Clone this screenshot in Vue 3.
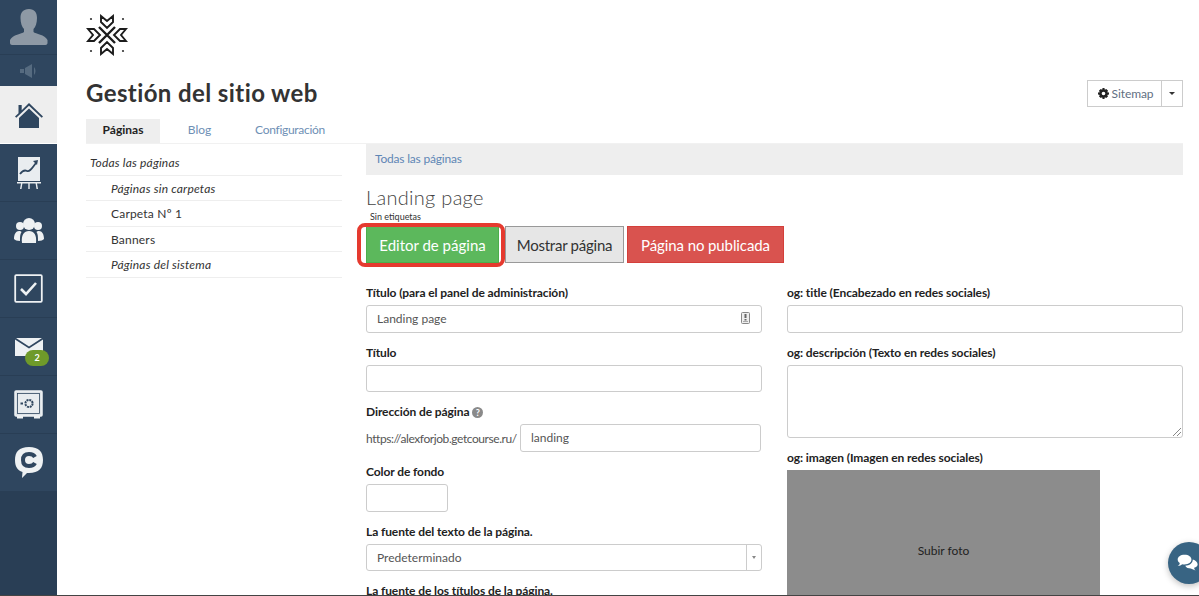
<script setup>
const menu = [
  { label: 'Todas las páginas', cls: 'it top' },
  { label: 'Páginas sin carpetas', cls: 'it sub' },
  { label: 'Carpeta Nº 1', cls: 'sub' },
  { label: 'Banners', cls: 'sub' },
  { label: 'Páginas del sistema', cls: 'it sub' },
]
</script>

<template>
  <div class="page">
    <aside class="rail">
      <div class="avatar">
        <svg width="38" height="36" viewBox="0 0 38 36"><path fill="#8e99a5" d="M19 0c5.500 0 8 3.500 8 9 0 5-1.500 9-3.500 11v3c2 2 11.500 2.500 14 8v3c0 1-1 2-2 2H2c-1 0-2-1-2-2v-3c2.500-5.500 12-6 14-8v-3c-2-2-3.500-6-3.500-11 0-5.500 2.500-9 8.500-9z"/></svg>
      </div>
      <div class="speaker">
        <svg width="18" height="14" viewBox="0 0 18 14"><path fill="#566b80" d="M0 5h4v4H0zM5 4l7-4v14L5 10zM14 3c2 2 2 6 0 8z"/></svg>
      </div>
      <div class="nav active">
        <svg width="30" height="29" viewBox="0 0 30 29"><path fill="#2f465f" d="M15 3 29 16.500l-1.300 1.200L15 5.700 2.300 17.700 1 16.500 4.500 13.200V5h3.200v5.200zM5 18 15 8.500 25 18v10H5z"/></svg>
      </div>
      <div class="nav">
        <svg width="24" height="32" viewBox="0 0 24 32"><path fill="#e9edf0" d="M1 0h22v24H1z"/><path fill="none" stroke="#2f465f" stroke-width="1.800" d="M3 17c3-4 5-4 7-3 3 1 5-3 9-8"/><path fill="#2f465f" d="m21 3-5 1 4 4z"/><path fill="#e9edf0" d="M0 25h24v1.500H0zM4 26.500h1.400L4.500 32H3zM11.300 26.500h1.400V32h-1.400zM18.600 26.500H20l1 5.500h-1.500z"/></svg>
      </div>
      <div class="nav">
        <svg width="30" height="25" viewBox="0 0 30 25"><g fill="#eef1f3"><circle cx="15" cy="6" r="6"/><circle cx="6" cy="8" r="4"/><circle cx="24" cy="8" r="4"/><path d="M8 25c-1-8 2-12 7-12s8 4 7 12zM0 21c0-5 2-8 5-8 1 0 2 0 2.500 1C6 16 6 19 6 23 3 23 1 22 0 21zM30 21c0-5-2-8-5-8-1 0-2 0-2.500 1 1.500 2 1.500 5 1.500 9 3 0 5-1 6-2z"/></g></svg>
      </div>
      <div class="nav">
        <svg width="29" height="29" viewBox="0 0 29 29"><rect x="1.200" y="1.200" width="26.600" height="26.600" rx="1" fill="none" stroke="#eef1f3" stroke-width="1.800"/><path fill="none" stroke="#eef1f3" stroke-width="2.600" d="m7 15 5 5 10-11"/></svg>
      </div>
      <div class="nav mail">
        <svg width="28" height="18" viewBox="0 0 28 18"><path fill="#eef1f3" d="M0 1.500 14 10.500 28 1.500V18H0z"/><path fill="#eef1f3" d="M1 0h26L14 8.500z"/></svg>
        <span class="badge">2</span>
      </div>
      <div class="nav">
        <svg width="29" height="29" viewBox="0 0 29 29"><rect x="1" y="1" width="27" height="25" rx="1" fill="#dfe4e8" stroke="#eef1f3" stroke-width="1.500"/><rect x="3.500" y="3.500" width="22" height="20" fill="#e8ecef" stroke="#2f465f" stroke-width=".8"/><circle cx="15" cy="13.500" r="3.600" fill="none" stroke="#2f465f" stroke-width="2" stroke-dasharray="2 .8"/><path fill="#2f465f" d="M6.500 12.500h2.500v2H6.500z"/><path fill="#eef1f3" d="M3 26h6v2.500H3zM20 26h6v2.500h-6z"/></svg>
      </div>
      <div class="nav">
        <svg width="30" height="31" viewBox="0 0 30 31"><path fill="#eef1f3" d="M15 0c10 0 14 5 14 13s-4 13-14 13h-2l-5 5 .5-6C3 23 1 19 1 13 1 5 5 0 15 0z"/><path fill="none" stroke="#2f465f" stroke-width="4" d="M21 10c-1-2-3-3-6-3-4 0-6 2-6 6s2 6 6 6c3 0 5-1 6-3"/></svg>
      </div>
      <div class="rail-end"></div>
    </aside>

    <main class="main">
      <div class="logo">
        <svg width="42" height="42" viewBox="0 0 42 42">
          <g fill="none" stroke="#1c1c1c" stroke-width="1.900" stroke-linejoin="miter">
            <path d="M15 2l6 5 6-5v6l-6 6-6-6zM15 40l6-5 6 5v-6l-6-6-6 6zM2 15l5 6-5 6h6l6-6-6-6zM40 15l-5 6 5 6h-6l-6-6 6-6z"/>
            <path stroke-width="2.400" d="M13 13l16 16M29 13 13 29"/>
          </g>
          <g fill="#333"><circle cx="5" cy="5" r="1.100"/><circle cx="37" cy="5" r="1.100"/><circle cx="5" cy="37" r="1.100"/><circle cx="37" cy="37" r="1.100"/></g>
        </svg>
      </div>

      <header class="head">
        <h1>Gestión del sitio web</h1>
        <div class="split">
          <button class="sm">
            <svg width="11" height="11" viewBox="0 0 24 24"><path fill="#222" fill-rule="evenodd" d="M10 0h4l1 4 3-2 4 4-2 3 4 1v4l-4 1 2 3-4 4-3-2-1 4h-4l-1-4-3 2-4-4 2-3-4-1v-4l4-1-2-3 4-4 3 2zM12 8a4 4 0 1 0 0 8 4 4 0 0 0 0-8z"/></svg>
            Sitemap
          </button>
          <button class="caret"><i></i></button>
        </div>
      </header>

      <nav class="tabs">
        <a class="tab on">Páginas</a>
        <a class="tab">Blog</a>
        <a class="tab cfg">Configuración</a>
      </nav>

      <div class="cols">
        <ul class="side">
          <li v-for="m in menu" :key="m.label" :class="m.cls">{{ m.label }}</li>
        </ul>

        <section class="content">
          <div class="crumb">Todas las páginas</div>
          <h2>Landing page</h2>
          <div class="tags">Sin etiquetas</div>
          <div class="actions">
            <button class="btn green">Editor de página</button>
            <button class="btn grey">Mostrar página</button>
            <button class="btn red">Página no publicada</button>
            <span class="mark"></span>
          </div>

          <div class="form">
            <div class="col">
              <label>Título (para el panel de administración)</label>
              <div class="inp val tall">Landing page
                <svg class="bk" width="9" height="12" viewBox="0 0 9 12"><rect x=".5" y=".5" width="8" height="11" rx="1" fill="#eee" stroke="#888"/><path fill="#666" d="M3.500 2h2v4h-2zM3.500 7h2v1.500h-2zM2 9.500h5V10H2z"/></svg>
              </div>
              <label>Título</label>
              <div class="inp"></div>
              <label class="q">Dirección de página <span class="help">?</span></label>
              <div class="url">
                <span>https://alexforjob.getcourse.ru/</span>
                <div class="inp val slug">landing</div>
              </div>
              <label>Color de fondo</label>
              <div class="inp color"></div>
              <label>La fuente del texto de la página.</label>
              <div class="inp val sel">Predeterminado<span class="arr"><i></i></span></div>
              <label>La fuente de los títulos de la página.</label>
            </div>
            <div class="col">
              <label>og: title (Encabezado en redes sociales)</label>
              <div class="inp tall"></div>
              <label>og: descripción (Texto en redes sociales)</label>
              <div class="inp area">
                <svg class="grip" width="9" height="9" viewBox="0 0 9 9"><path stroke="#888" d="M1 9l8-8M5 9l4-4"/></svg>
              </div>
              <label>og: imagen (Imagen en redes sociales)</label>
              <div class="photo">Subir foto</div>
            </div>
          </div>
        </section>
      </div>
    </main>

    <div class="chat">
      <svg width="32" height="26" viewBox="0 0 32 26"><path fill="#fff" d="M11 1c6 0 10 3 10 7s-4 7-10 7c-1 0-2 0-3-.300C6 16 4 17 1 17c2-1 3-2 3-4-2-1-3-3-3-5 0-4 4-7 10-7z"/><path fill="#fff" d="M23 8c0 5-5 9-11 9 1 3 5 4 8 4l7 3c-1-1-2-2-2-4 3-1 5-3 5-5 0-3-3-6-7-7z"/></svg>
    </div>
    <div class="bottom"></div>
  </div>
</template>

<style scoped>
.page {
  position: relative;
  display: flex;
  width: 1199px;
  height: 596px;
  overflow: hidden;
  background: #fff;
  font-family: "Lato", "Liberation Sans", sans-serif;
  color: #333;
  font-size: 12px;
}
.rail {
  width: 57px;
  flex: none;
  background: #2f465f;
  display: flex;
  flex-direction: column;
}
.avatar { height: 55px; display: flex; align-items: flex-end; justify-content: center; padding-bottom: 9px; box-sizing: border-box; border-bottom: 1px solid #293e55; }
.speaker { height: 31px; display: flex; align-items: center; justify-content: center; box-sizing: border-box; }
.nav {
  position: relative;
  height: 58px;
  flex: none;
  display: flex;
  align-items: center;
  justify-content: center;
  border-bottom: 1px solid #293e55;
  box-sizing: border-box;
}
.nav.active { background: #eee; border: 0; border-bottom: 1px solid #fff; height: 58px; }
.badge {
  position: absolute;
  left: 25px;
  top: 32px;
  width: 24px;
  height: 16px;
  border-radius: 8px;
  background: #6f9a2a;
  color: #fff;
  font-size: 9px;
  font-weight: 700;
  line-height: 16px;
  text-align: center;
}
.rail-end { flex: 1; background: #293e55; }
.main { flex: 1; min-width: 0; padding: 0 16px 0 29px; }
.logo { height: 62px; padding-top: 14px; box-sizing: border-box; }
.head { display: flex; justify-content: space-between; align-items: flex-start; height: 57px; }
h1 { margin: 15px 0 0; font-size: 24px; line-height: 32px; font-weight: 700; color: #333; letter-spacing: .4px; }
.split { display: flex; margin-top: 18px; }
.split button { height: 27px; background: #fff; border: 1px solid #ccc; font: inherit; color: #5f6f82; padding: 0; display: flex; align-items: center; justify-content: center; gap: 3px; }
.sm { width: 75px; letter-spacing: -.1px; padding-left: 2px !important; }
.caret { width: 22px; margin-left: -1px; }
.caret i { border: 3px solid transparent; border-top: 3px solid #333; border-bottom: 0; }
.tabs { display: flex; height: 25px; box-sizing: border-box; border-bottom: 1px solid #f1f1f1; }
.tab { height: 24px; line-height: 22px; text-align: center; color: #6e8fb5; font-size: 12px; }
.tab.on { width: 74px; background: #eee; color: #222; font-weight: 700; }
.tab:nth-child(2) { width: 79px; }
.tab.cfg { width: 102px; letter-spacing: -.3px; }
.cols { display: flex; }
.side { list-style: none; margin: 6px 0 0; padding: 0; width: 256px; flex: none; }
.side li { height: 25.500px; line-height: 25px; border-bottom: 1px solid #eee; padding-left: 25px; box-sizing: border-box; color: #333; letter-spacing: .2px; }
.side li.top { padding-left: 4px; }
.side li.it { font-style: italic; }
.content { margin-left: 24px; width: 817px; }
.crumb { height: 31px; line-height: 29px; padding-left: 9px; background: #eee; color: #5e86b5; font-size: 12px; letter-spacing: -.2px; }
h2 { margin: 8px 0 0; font-size: 20px; line-height: 28px; font-weight: 300; color: #444; letter-spacing: .3px; }
.tags { font-size: 9px; color: #333; padding-left: 4px; line-height: 12px; margin-top: 0; }
.actions { position: relative; display: flex; margin-top: 3px; height: 37px; }
.btn { height: 37px; border: 1px solid; font: inherit; font-size: 15px; padding: 0; box-sizing: border-box; }
.green { width: 133px; margin-right: 6px; background: #5cb85c; border-color: #4cae4c; color: #fff; }
.grey { width: 119px; margin-right: 3px; background: #e6e6e6; border-color: #999; color: #333; letter-spacing: -.25px; }
.red { width: 157px; background: #d9534f; border-color: #d43f3a; color: #fff; letter-spacing: -.1px; }
.mark { position: absolute; left: -9px; top: -3px; width: 148px; height: 44px; box-sizing: border-box; border: 4.500px solid #e53a2f; border-radius: 8px; }
.form { display: grid; grid-template-columns: 396px 396px; column-gap: 25px; margin-top: 10px; }
.col { min-width: 0; }
label { display: block; font-weight: 700; font-size: 12px; line-height: 16px; color: #222; margin-top: 12px; letter-spacing: -.09px; }
.inp { position: relative; height: 27px; border: 1px solid #ccc; border-radius: 3px; box-sizing: border-box; margin-top: 4px; background: #fff; margin-bottom: 12px; }
.inp.tall { height: 28px; }
.inp.val { line-height: 25px; padding-left: 10px; color: #555; }
.bk { position: absolute; right: 11px; top: 6px; }
.help { display: inline-block; width: 11px; height: 11px; border-radius: 50%; background: #8a8a8a; color: #fff; font-size: 9px; line-height: 11px; text-align: center; }
.url { display: flex; align-items: center; margin-top: 4px; margin-bottom: 12px; color: #555; }
.url span { width: 154px; flex: none; letter-spacing: -.42px; white-space: nowrap; }
.slug { flex: none; width: 241px; margin: 0; height: 28px; }
.color { width: 82px; height: 28px; }
.sel { padding-right: 14px; }
.arr { position: absolute; right: 0; top: 0; bottom: 0; width: 14px; border-left: 1px solid #ccc; display: flex; align-items: center; justify-content: center; }
.arr i { border: 2.500px solid transparent; border-top: 3px solid #888; border-bottom: 0; }
.area { height: 73px; }
.grip { position: absolute; right: 1px; bottom: 1px; }
.photo { width: 313px; height: 160px; margin-top: 4px; background: #8c8c8c; color: #222; display: flex; align-items: center; justify-content: center; }
.chat { position: absolute; left: 1168px; top: 542px; width: 42px; height: 42px; border-radius: 50%; background: #386483; box-shadow: 0 2px 6px rgba(0,0,0,.25); display: flex; align-items: center; justify-content: flex-start; padding-left: 9px; box-sizing: border-box; }
.chat svg { flex: none; width: 22px; height: 18px; }
.bottom { position: absolute; left: 0; right: 0; bottom: 0; height: 1px; background: #444; }
</style>
